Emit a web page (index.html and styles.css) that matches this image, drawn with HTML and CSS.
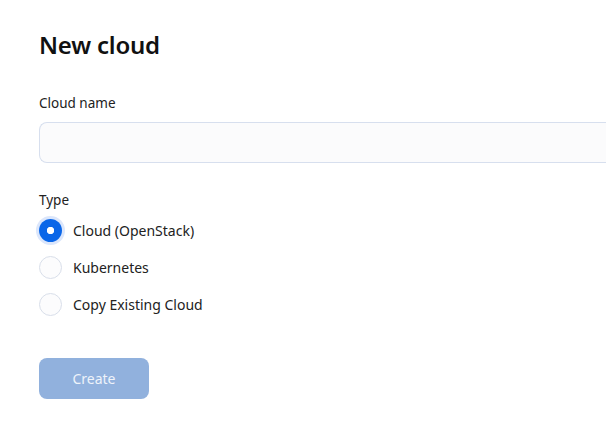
FILE: index.html
```html
<!DOCTYPE html>
<html>
<head>
<meta charset="utf-8">
<link rel="stylesheet" href="styles.css">
</head>
<body>
<div class="page">
  <h1 class="title">New cloud</h1>
  <div class="field">
    <label class="label">Cloud name</label>
    <input class="input" type="text">
  </div>
  <div class="field type-field">
    <div class="label">Type</div>
    <div class="radios">
      <label class="radio-row"><span class="radio checked"></span><span class="radio-text">Cloud (OpenStack)</span></label>
      <label class="radio-row"><span class="radio"></span><span class="radio-text">Kubernetes</span></label>
      <label class="radio-row"><span class="radio"></span><span class="radio-text">Copy Existing Cloud</span></label>
    </div>
  </div>
  <button class="btn">Create</button>
</div>
</body>
</html>
```
FILE: styles.css
```css
html, body {
  margin: 0;
  padding: 0;
  background: #ffffff;
  overflow: hidden;
}
body {
  font-family: "Noto Sans", "Open Sans", sans-serif;
  color: #1a1a1a;
}
.page {
  padding: 30px 0 0 39px;
  display: flex;
  flex-direction: column;
  align-items: flex-start;
}
.title {
  margin: 0;
  font-size: 24px;
  font-weight: 600;
  line-height: 30px;
  color: #111;
  letter-spacing: -0.2px;
}
.field {
  margin-top: 34px;
  display: flex;
  flex-direction: column;
  align-self: stretch;
}
.label {
  font-size: 13.5px;
  line-height: 18px;
  color: #222;
}
.input {
  margin-top: 10px;
  height: 41px;
  box-sizing: border-box;
  width: 100%;
  border: 1px solid #d7dfee;
  border-right: none;
  border-radius: 8px 0 0 8px;
  background: #fbfbfc;
  outline: none;
}
.type-field {
  margin-top: 28px;
}
.radios {
  margin-top: 10px;
  display: flex;
  flex-direction: column;
  gap: 14px;
}
.radio-row {
  display: flex;
  align-items: center;
  gap: 11px;
  height: 23px;
}
.radio {
  width: 23px;
  height: 23px;
  box-sizing: border-box;
  border-radius: 50%;
  border: 1px solid #d9dfea;
  background: #fcfcfd;
  display: block;
}
.radio.checked {
  border: none;
  background: radial-gradient(circle, #ffffff 0 3.4px, #0a66e8 4px);
  box-shadow: 0 0 0 3px #dbe6fb;
}
.radio-text {
  font-size: 14px;
  color: #222;
}
.btn {
  margin-top: 42px;
  width: 110px;
  height: 41px;
  border: none;
  border-radius: 8px;
  background: #91b1dd;
  color: #eef3fa;
  font-family: "Noto Sans", "Open Sans", sans-serif;
  font-size: 14px;
}
```
